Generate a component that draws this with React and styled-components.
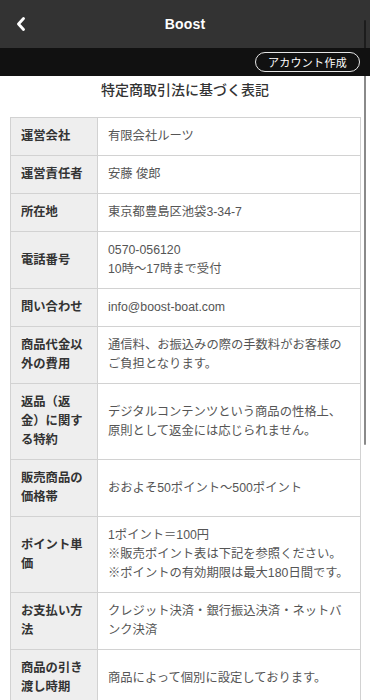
import React from "react";
import styled, { createGlobalStyle } from "styled-components";

const Global = createGlobalStyle`
  html, body { margin: 0; padding: 0; background: #fff; }
  body { font-family: "Liberation Sans", "Noto Sans CJK JP", sans-serif; }
`;

const Page = styled.div`
  position: relative;
  width: 370px;
  min-height: 700px;
  overflow: hidden;
`;

const Header = styled.header`
  height: 48px;
  background: #333;
  display: grid;
  grid-template-columns: 48px 1fr 48px;
  align-items: center;
`;

const BackButton = styled.div`
  display: flex;
  align-items: center;
  padding-left: 16px;
`;

const Brand = styled.h1`
  margin: 0;
  text-align: center;
  color: #fff;
  font-size: 14px;
  font-weight: bold;
  letter-spacing: 0.2px;
`;

const SubBar = styled.div`
  height: 28px;
  background: #111;
  display: flex;
  align-items: center;
  justify-content: flex-end;
  padding-right: 10px;
`;

const Pill = styled.span`
  border: 1px solid #e6e6e6;
  border-radius: 10px;
  height: 18px;
  padding: 0 12px;
  display: flex;
  align-items: center;
  color: #fff;
  font-family: "Noto Sans CJK JP", sans-serif;
  font-size: 11px;
  letter-spacing: 0.3px;
`;

const Title = styled.h2`
  margin: 0;
  padding: 3px 0 18px;
  text-align: center;
  line-height: 20px;
  font-size: 14px;
  font-weight: 500;
  color: #333;
  font-family: "Noto Sans CJK JP", sans-serif;
`;

const Table = styled.table`
  margin: 0 9px 0 10px;
  width: 351px;
  border-collapse: collapse;
  font-size: 12.3px;
  line-height: 19px;
  font-family: "Liberation Sans", "Noto Sans CJK JP", sans-serif;
`;

const Label = styled.th`
  width: 66px;
  padding: 9px 10px;
  background: #eee;
  border: 1px solid #d2d2d2;
  text-align: left;
  vertical-align: middle;
  color: #333;
  font-weight: bold;
`;

const Value = styled.td`
  padding: 9px 10px;
  border: 1px solid #d2d2d2;
  color: #555;
  vertical-align: middle;
`;

const Scrollbar = styled.div`
  position: absolute;
  top: 20px;
  right: 4px;
  width: 2px;
  height: 425px;
  border-radius: 1px;
  background: linear-gradient(
    to bottom,
    #1c1c1c 0,
    #1c1c1c 28px,
    #111 28px,
    #111 56px,
    #8a8a8a 56px
  );
`;

const rows = [
  ["運営会社", ["有限会社ルーツ"]],
  ["運営責任者", ["安藤 俊郎"]],
  ["所在地", ["東京都豊島区池袋3-34-7"]],
  ["電話番号", ["0570-056120", "10時～17時まで受付"]],
  ["問い合わせ", ["info@boost-boat.com"]],
  ["商品代金以外の費用", ["通信料、お振込みの際の手数料がお客様のご負担となります。"]],
  ["返品（返金）に関する特約", ["デジタルコンテンツという商品の性格上、原則として返金には応じられません。"]],
  ["販売商品の価格帯", ["おおよそ50ポイント～500ポイント"]],
  ["ポイント単価", ["1ポイント＝100円", "※販売ポイント表は下記を参照ください。", "※ポイントの有効期限は最大180日間です。"]],
  ["お支払い方法", ["クレジット決済・銀行振込決済・ネットバンク決済"]],
  ["商品の引き渡し時期", ["商品によって個別に設定しております。"]],
];

export default function App() {
  return (
    <Page>
      <Global />
      <Header>
        <BackButton>
          <svg width="10" height="14" viewBox="0 0 10 14">
            <path d="M7.5 1.5 L2.5 7 L7.5 12.5" fill="none" stroke="#fff" strokeWidth="2.8" strokeLinecap="round" strokeLinejoin="round" />
          </svg>
        </BackButton>
        <Brand>Boost</Brand>
        <span />
      </Header>
      <SubBar>
        <Pill>アカウント作成</Pill>
      </SubBar>
      <Title>特定商取引法に基づく表記</Title>
      <Table>
        <tbody>
          {rows.map(([label, lines]) => (
            <tr key={label}>
              <Label>{label}</Label>
              <Value>
                {lines.map((l, i) => (
                  <React.Fragment key={i}>
                    {i > 0 && <br />}
                    {l}
                  </React.Fragment>
                ))}
              </Value>
            </tr>
          ))}
        </tbody>
      </Table>
      <Scrollbar />
    </Page>
  );
}
